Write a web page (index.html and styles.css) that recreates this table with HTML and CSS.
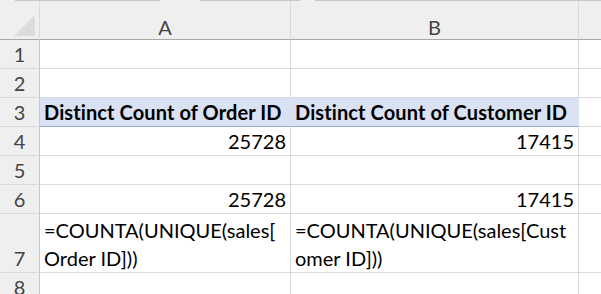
FILE: index.html
```html
<!DOCTYPE html>
<html lang="en">
<head>
    <meta charset="UTF-8">
    <meta name="viewport" content="width=device-width, initial-scale=1.0">
    <title>Distinct Count</title>
    <link rel="stylesheet" href="styles.css">
</head>
<body>
    <div class="ribbon-edge">
        <span class="tab-edge tab-1"></span>
        <span class="tab-edge tab-2"></span>
        <span class="tab-edge tab-3"></span>
    </div>
    <div class="sheet">
        <!-- column headers -->
        <div class="corner">
            <svg width="22" height="22" viewBox="0 0 22 22"><polygon points="21,0 21,21 0,21" fill="#dcdcdc"/></svg>
        </div>
        <div class="col-head">A</div>
        <div class="col-head">B</div>
        <div class="col-head last"></div>

        <div class="row-head">1</div>
        <div class="cell"></div>
        <div class="cell"></div>
        <div class="cell last"></div>

        <div class="row-head">2</div>
        <div class="cell"></div>
        <div class="cell"></div>
        <div class="cell last"></div>

        <div class="row-head">3</div>
        <div class="cell pivot-head">Distinct Count of Order ID</div>
        <div class="cell pivot-head">Distinct Count of Customer ID</div>
        <div class="cell last"></div>

        <div class="row-head">4</div>
        <div class="cell num">25728</div>
        <div class="cell num">17415</div>
        <div class="cell last"></div>

        <div class="row-head">5</div>
        <div class="cell"></div>
        <div class="cell"></div>
        <div class="cell last"></div>

        <div class="row-head">6</div>
        <div class="cell num">25728</div>
        <div class="cell num">17415</div>
        <div class="cell last"></div>

        <div class="row-head">7</div>
        <div class="cell wrap">=COUNTA(UNIQUE(sales[<br>Order ID]))</div>
        <div class="cell wrap">=COUNTA(UNIQUE(sales[Cust<br>omer ID]))</div>
        <div class="cell last"></div>

        <div class="row-head">8</div>
        <div class="cell"></div>
        <div class="cell"></div>
        <div class="cell last"></div>
    </div>
</body>
</html>
```

FILE: styles.css
```css
body {
    margin: 0;
    background: #ffffff;
    font-family: Lato, "Open Sans", sans-serif;
    font-size: 20px;
    color: #000;
    overflow: hidden;
}

.ribbon-edge {
    display: flex;
    height: 1px;
    background: #efefef;
}

.tab-edge {
    height: 1px;
    background: #c6c6c6;
}

.tab-1 {
    margin-left: 15px;
    width: 145px;
}

.tab-2 {
    margin-left: 40px;
    width: 100px;
}

.tab-3 {
    margin-left: 15px;
    flex: 1;
}

.sheet {
    display: grid;
    grid-template-columns: 40px 251px 288px 1fr;
    grid-template-rows: 39px repeat(6, 29px) 59px 29px;
}

.sheet > div {
    box-sizing: border-box;
    border-right: 1px solid #dadada;
    border-bottom: 1px solid #dadada;
    line-height: 28px;
    white-space: nowrap;
    overflow: hidden;
}

.corner,
.col-head {
    background: #efefef;
    border-bottom-color: #a8a8a8 !important;
}

.corner {
    display: flex;
    justify-content: flex-end;
    align-items: flex-end;
    padding: 0 3px 2px 0;
}

.corner svg {
    display: block;
}

.col-head {
    color: #444;
    text-align: center;
    padding-top: 12px;
    line-height: 24px;
}

.row-head {
    background: #efefef;
    color: #444;
    text-align: center;
    border-right-color: #c8c8c8 !important;
    display: flex;
    align-items: flex-end;
    justify-content: center;
}

.cell {
    padding: 0 4px;
}

.last {
    border-right: none !important;
}

.pivot-head {
    background: #d9e1f2;
    font-weight: bold;
    letter-spacing: 0.1px;
    border-bottom-color: #8eaadb !important;
    border-right-color: #d9e1f2 !important;
}

.num {
    text-align: right;
}

.wrap {
    display: flex;
    align-items: flex-end;
    line-height: 29px;
    padding-bottom: 0;
}
```
